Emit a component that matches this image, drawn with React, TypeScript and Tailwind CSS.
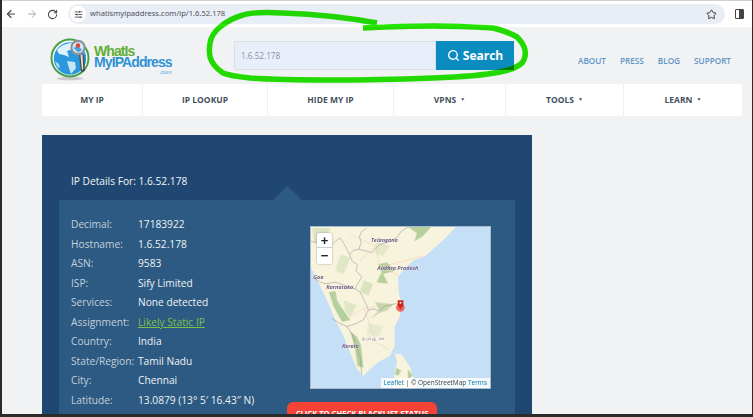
import { ArrowLeft, ArrowRight, RotateCw, Star, SlidersHorizontal, Search } from "lucide-react";

const rows: [string, string][] = [
  ["Decimal:", "17183922"],
  ["Hostname:", "1.6.52.178"],
  ["ASN:", "9583"],
  ["ISP:", "Sify Limited"],
  ["Services:", "None detected"],
  ["Assignment:", "Likely Static IP"],
  ["Country:", "India"],
  ["State/Region:", "Tamil Nadu"],
  ["City:", "Chennai"],
  ["Latitude:", "13.0879 (13° 5′ 16.43″ N)"],
];

const nav: [string, boolean][] = [
  ["MY IP", false],
  ["IP LOOKUP", false],
  ["HIDE MY IP", false],
  ["VPNS", true],
  ["TOOLS", true],
  ["LEARN", true],
];

function Logo() {
  return (
    <div className="flex items-start w-[192px] h-[57px]">
      <svg width="44" height="44" viewBox="0 0 44 44" className="mt-[10px] ml-[7px] shrink-0">
        <ellipse cx="21" cy="41.5" rx="13" ry="1.8" fill="#c9cacb" />
        <circle cx="21" cy="21" r="18.5" fill="#fff" stroke="#46a04a" strokeWidth="2" />
        <circle cx="21" cy="21.5" r="16.2" fill="#2b98de" />
        <path d="M8 13 C12 8 18 6 23 6 L24 12 L18 14 L20 20 L15 18 L10 17Z" fill="#dff1fb" />
        <path d="M18 24 L26 25 L27 31 L22 37 L20 31Z" fill="#c6e6f7" />
        <path d="M6 24 L10 27 L11 31 L8 30Z" fill="#a9d9f3" />
        <path d="M30 17 L35 18 L36 34 L32 35Z" fill="#4c4c4c" />
        <path d="M31.5 18 L33.5 18 L34.2 32 L33 33Z" fill="#e8e8e8" />
        <circle cx="29" cy="10.5" r="6.6" fill="#d5e9f5" stroke="#8d9297" strokeWidth="2.2" />
        <path d="M24.5 11 L29 8.5 L33 13 L29 15.5Z" fill="#4ba3dc" />
        <circle cx="29" cy="8.5" r="2.2" fill="#d9433a" />
      </svg>
      <div className="ml-[1px] mt-[19px] font-['Liberation_Sans',sans-serif] font-bold text-[14px] tracking-[-0.9px] leading-[11px]">
        <div className="text-[#5fae35]">WhatIs</div>
        <div className="text-[#2f93d6]">MyIPAddress</div>
        <div className="text-[#55a7dc] text-[6px] font-normal tracking-normal text-right leading-[6px] mt-px">.com</div>
      </div>
    </div>
  );
}

function MapView() {
  return (
    <div className="relative w-[181px] h-[163px] overflow-hidden bg-[#c4dff6] border border-[#a9bccd]">
      <svg viewBox="31 17 543 490" className="w-full h-full block" preserveAspectRatio="none">
        <defs>
          <filter id="soft" x="-20%" y="-20%" width="140%" height="140%">
            <feGaussianBlur stdDeviation="2" />
          </filter>
        </defs>
        <path d="M470 17 L440 50 L395 90 L378 105 L340 120 L310 150 L295 170 L298 220 L305 250 L300 290 L285 320 L285 380 L270 410 L240 425 L215 445 L190 470 L170 450 L150 400 L130 350 L100 290 L75 230 L50 180 L31 140 L31 17Z" fill="#f8f3dd" />
        <path d="M285 402 L305 404 L330 440 L352 507 L280 507 L284 460 L292 430Z" fill="#f8f3dd" />
        <g fill="#b5d09c" filter="url(#soft)">
          <path d="M235 130 L262 124 L285 150 L250 160 L265 190 L230 185 L245 155Z" />
          <path d="M325 17 L395 17 L370 45 L345 60 L352 35Z" />
          <path d="M85 215 L105 212 L110 240 L122 260 L150 300 L125 305 L100 260Z" />
          <path d="M150 335 L170 350 L182 375 L190 445 L172 440 L165 390Z" />
          <path d="M225 245 L280 252 L262 270 L240 278 L210 298 L238 270Z" opacity=".75" />
          <path d="M35 20 L90 20 L72 58 L40 66Z" opacity=".4" />
          <path d="M290 445 L305 455 L295 470 L285 465Z" />
          <path d="M325 450 L340 470 L325 480Z" />
          <path d="M120 100 L150 110 L130 160 L105 150Z" opacity=".35" />
          <path d="M190 180 L220 190 L205 225 L180 215Z" opacity=".45" />
          <path d="M230 60 L270 75 L250 105 L225 95Z" opacity=".3" />
          <path d="M130 240 L170 255 L150 290 L135 275Z" opacity=".35" />
          <path d="M205 310 L250 320 L235 350 L200 345Z" opacity=".25" />
        </g>
        <g fill="none" stroke="#868d91" strokeWidth="1.5" strokeLinejoin="bevel">
          <path d="M200 20 L185 30 L178 45 L183 65 L176 85 L160 88 L148 100 L155 120 L172 132 L168 150 L185 170 L172 190 L165 205 L180 215 L190 235 L200 255 L205 270 L222 266 L235 272 L255 258 L290 250" />
          <path d="M176 85 L198 90 L215 95 L228 82 L240 70 L265 62 L290 50 L305 30 L325 17" />
          <path d="M95 295 L118 310 L140 320 L165 312 L190 300 L205 270" />
          <path d="M140 320 L158 345 L165 370 L172 390 L180 410 L185 465" />
          <path d="M43 175 L60 185 L75 190 L105 185 L135 195 L165 205" />
          <path d="M31 60 L60 68 L90 75 L105 60 L120 50 L135 75 L148 100" />
        </g>
        <g fill="none" stroke="#efb9a0" strokeWidth="1.1">
          <path d="M228 75 L240 140 L300 165 M228 75 L180 120 M192 265 L130 300 M192 265 L290 250 M192 265 L230 370 L270 390 M228 75 L150 40 M240 140 L370 105" />
        </g>
        <g fontFamily="'Open Sans',sans-serif" fontSize="16.5" fontStyle="italic" fontWeight="700" fill="#6c5a80" stroke="#fff" strokeWidth="1" paintOrder="stroke">
          <text x="213" y="64">Telangana</text>
          <text x="232" y="148">Andhra Pradesh</text>
          <text x="38" y="174">Goa</text>
          <text x="77" y="207">Karnataka</text>
          <text x="125" y="384">Kerala</text>
          <text x="185" y="360" fontFamily="'Noto Sans',sans-serif" fontStyle="normal" fontWeight="500" letterSpacing="3">தமிழ் நா</text>
        </g>
        <circle cx="302" cy="262" r="13" fill="#ee4b45" opacity=".8" />
        <path d="M294 240 H311 V256 L302.5 268 L294 256Z" fill="#c8281c" />
        <rect x="300" y="245" width="5" height="5" fill="#fff" />
      </svg>
      <div className="absolute left-[6px] top-[6px] w-[15px] h-[31px] bg-white rounded-[2px] flex flex-col items-center font-['Liberation_Sans',sans-serif] font-bold text-[#222] text-[13px] leading-[15px] shadow-[0_0_2px_rgba(0,0,0,0.4)]">
        <div className="h-[15px] w-full text-center border-b border-[#ccc]">+</div>
        <div className="h-[15px] w-full text-center">−</div>
      </div>
      <div className="absolute right-0 bottom-0 h-[10px] px-[3px] bg-white/80 text-[6.5px] leading-[10px] whitespace-nowrap text-[#444] font-['Open_Sans',sans-serif]">
        <span className="text-[#0078a8]">Leaflet</span> | © OpenStreetMap <span className="text-[#0078a8]">Terms</span>
      </div>
    </div>
  );
}

export default function App() {
  return (
    <div className="relative w-[753px] h-[417px] overflow-hidden bg-[#f1f2f4] border-l-2 border-r border-b-[3px] border-[#2b2b2b] font-['Open_Sans',sans-serif] blur-[0.5px]">
      <div className="h-[27px] bg-white flex items-center pl-[3px] border-t border-[#d0d0d0]">
        <ArrowLeft size={12} strokeWidth={2.2} className="text-[#444]" />
        <ArrowRight size={12} strokeWidth={2} className="text-[#aaa] ml-[9px]" />
        <RotateCw size={11} strokeWidth={2.2} className="text-[#444] ml-[9px]" />
        <div className="ml-[10px] w-[657px] h-[20px] rounded-full bg-[#e9edf6] flex items-center pl-[2px]">
          <div className="w-[16px] h-[16px] rounded-full bg-white flex items-center justify-center">
            <SlidersHorizontal size={9} strokeWidth={2} className="text-[#333]" />
          </div>
          <span className="ml-[4px] text-[7.6px] text-[#4f5358] font-['Noto_Sans',sans-serif]">whatismyipaddress.com/ip/1.6.52.178</span>
          <Star size={11} strokeWidth={2} className="text-[#333] ml-auto mr-[8px]" />
        </div>
        <div className="ml-[10px] w-[9px] h-[10px] border border-[#444] rounded-[1px] flex justify-end">
          <div className="w-[4px] bg-[#444]" />
        </div>
      </div>

      <div className="pl-[40px]">
        <div className="flex h-[57px] w-[700px]">
          <Logo />
          <div className="flex h-[29px] mt-[14px]">
            <div className="w-[202px] bg-[#e8effb] border border-[#dcdfe4] text-[8.2px] leading-[27px] pl-[6px] text-[#8b929b]">1.6.52.178</div>
            <div className="w-[78px] bg-[#0b8cc0] text-white flex items-center justify-center gap-[3px] text-[12px] font-bold">
              <Search size={13} strokeWidth={2.6} />
              Search
            </div>
          </div>
          <div className="ml-[64px] mt-[28px] flex gap-[14px] text-[8.2px] font-semibold text-[#5f95c6] whitespace-nowrap">
            <span>ABOUT</span>
            <span>PRESS</span>
            <span>BLOG</span>
            <span>SUPPORT</span>
          </div>
        </div>

        <div className="w-[700px] h-[32px] grid grid-cols-[101px_125px_126px_112px_118px_118px] bg-white">
          {nav.map(([n, caret], i) => (
            <div key={n} className={`flex items-center justify-center text-[8.5px] font-bold text-[#44505c] ${i < 5 ? "border-r border-[#eef0f2]" : ""}`}>
              {n}
              {caret && <span className="ml-[4px] text-[5px]">▼</span>}
            </div>
          ))}
        </div>

        <div className="mt-[19px] w-[490px] h-[300px] bg-[#1f4772] pt-[65px] px-[17px] overflow-hidden">
          <div className="relative h-0">
            <div className="absolute left-[12px] -top-[26px] text-[10.2px] font-medium leading-[14px] text-[#f2f5f8] whitespace-nowrap">IP Details For: 1.6.52.178</div>
            <div className="absolute left-[218px] -top-[10px] w-[21px] h-[21px] rotate-45 bg-[#2d5a82]" />
          </div>
          <div className="relative w-[456px] h-[240px] bg-[#2d5a82] pl-[12px] pt-[15.4px] flex">
            <div className="w-[239px] shrink-0 flex flex-col">
              {rows.map(([k, v]) => (
                <div key={k} className="flex h-[19.5px] items-center text-[10.2px] whitespace-nowrap">
                  <span className="w-[67px] text-[#c3cfda] shrink-0">{k}</span>
                  <span className={k === "Assignment:" ? "text-[#7ec04a] underline" : "font-medium text-[#eef2f6]"}>{v}</span>
                </div>
              ))}
            </div>
            <div className="mt-[10.6px]">
              <MapView />
              <div className="mt-[13px] -ml-[23px] w-[150px] h-[30px] rounded-t-[6px] bg-[#f44336] text-white text-[7.6px] font-bold text-center pt-[6px] whitespace-nowrap">
                CLICK TO CHECK BLACKLIST STATUS
              </div>
            </div>
          </div>
        </div>
      </div>

      <svg viewBox="0 0 753 417" className="absolute -left-[2px] top-0 w-[753px] h-[417px] pointer-events-none mix-blend-multiply">
        <path
          d="M377 23 C350 18 310 14 283 13 C265 12 252 12 243 15 C232 18 226 22 220 27 C214 32 211 37 210 43 C209 48 209 52 210 57 C212 64 217 69 223 73 C230 76 240 77 250 78 C280 80 310 80 333 80 C370 80 405 79 433 78 C460 77 485 75 500 72 C510 70 518 67 522 63 C525 59 526 55 525 50 C524 45 521 41 517 37 C510 33 502 30 493 28 C475 27 455 26 433 26 C410 26 385 27 363 28"
          fill="none"
          stroke="#24e600"
          strokeWidth="5.5"
          strokeLinecap="butt"
        />
      </svg>
    </div>
  );
}
